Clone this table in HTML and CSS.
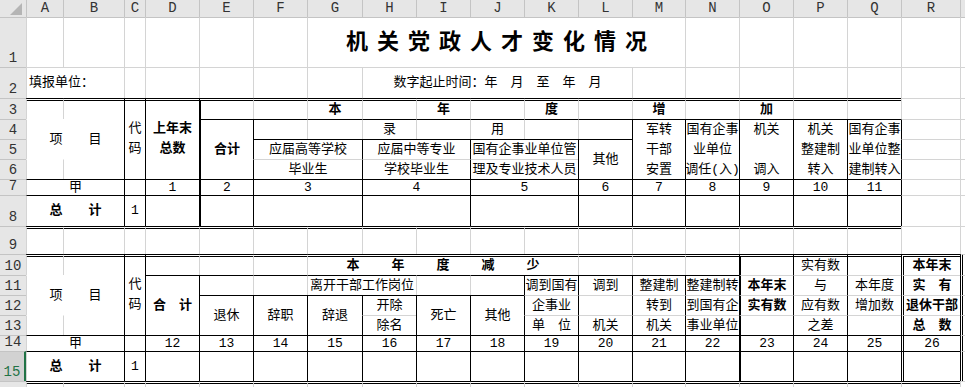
FILE: index.html
```html
<!DOCTYPE html>
<html lang="zh-CN">
<head>
<meta charset="utf-8">
<title>机关党政人才变化情况</title>
<link rel="stylesheet" href="styles.css">
</head>
<body>
<div class="sheet">
  <!-- column header -->
  <div class="corner"><svg width="26" height="17" viewBox="0 0 26 17"><polygon points="22,3 22,15 10,15" fill="#b5b5b5"/></svg></div>
  <div class="ch">A</div><div class="ch">B</div><div class="ch">C</div><div class="ch">D</div><div class="ch">E</div><div class="ch">F</div><div class="ch">G</div><div class="ch">H</div><div class="ch">I</div><div class="ch">J</div><div class="ch">K</div><div class="ch">L</div><div class="ch">M</div><div class="ch">N</div><div class="ch">O</div><div class="ch">P</div><div class="ch">Q</div><div class="ch">R</div><div class="ch"></div>

  <!-- row 1 -->
  <div class="rh r1h">1</div>
  <div class="c r1"></div><div class="c r1"></div><div class="c r1"></div><div class="c r1"></div><div class="c r1"></div><div class="c r1"></div>
  <div class="c r1 s7 title">机关党政人才变化情况</div>
  <div class="c r1"></div><div class="c r1"></div><div class="c r1"></div><div class="c r1"></div><div class="c r1"></div><div class="c r1"></div>

  <!-- row 2 -->
  <div class="rh">2</div>
  <div class="c s2 lft">填报单位：</div>
  <div class="c"></div><div class="c"></div><div class="c"></div><div class="c"></div><div class="c"></div>
  <div class="c s5">数字起止时间：年　月　至　年　月</div>
  <div class="c"></div><div class="c"></div><div class="c"></div><div class="c"></div><div class="c"></div><div class="c"></div><div class="c"></div>

  <!-- row 3 -->
  <div class="rh">3</div>
  <div class="c dt"></div><div class="c dt"></div>
  <div class="c dt kl v4 pt">代<br>码</div>
  <div class="c dt kl v4 pt b">上年末<br>总数</div>
  <div class="c dt tl"></div><div class="c dt"></div>
  <div class="c dt b">本</div><div class="c dt"></div>
  <div class="c dt b">年</div><div class="c dt"></div>
  <div class="c dt b">度</div><div class="c dt"></div>
  <div class="c dt b">增</div><div class="c dt"></div>
  <div class="c dt b">加</div><div class="c dt"></div><div class="c dt"></div>
  <div class="c"></div><div class="c"></div>

  <!-- row 4 -->
  <div class="rh">4</div>
  <div class="c s2 v2 nt">项　　目</div>
  <div class="c v3 tl kt b">合计</div>
  <div class="c kl kt"></div><div class="c kt"></div><div class="c kt">录</div><div class="c kt"></div><div class="c kt">用</div><div class="c kt"></div><div class="c kt"></div>
  <div class="c v3 kl kt">军转<br>干部<br>安置</div>
  <div class="c v3 kl kt">国有企事<br>业单位<br>调任(入)</div>
  <div class="c v3 kl kt">机关<br><br>调入</div>
  <div class="c v3 kl kt">机关<br>整建制<br>转入</div>
  <div class="c v3 kl kt">国有企事<br>业单位整<br>建制转入</div>
  <div class="c kl"></div><div class="c"></div>

  <!-- row 5 -->
  <div class="rh">5</div>
  <div class="c s2 kl kt">应届高等学校</div>
  <div class="c s2 kl kt">应届中等专业</div>
  <div class="c s2 kl kt">国有企事业单位管</div>
  <div class="c v2 kl kt">其他</div>
  <div class="c kl"></div><div class="c"></div>

  <!-- row 6 -->
  <div class="rh">6</div>
  <div class="c nt"></div><div class="c nt"></div>
  <div class="c s2 kl">毕业生</div>
  <div class="c s2 kl">学校毕业生</div>
  <div class="c s2 kl">理及专业技术人员</div>
  <div class="c kl"></div><div class="c"></div>

  <!-- row 7 -->
  <div class="rh">7</div>
  <div class="c s2 kt">甲</div>
  <div class="c kl kt"></div>
  <div class="c kl kt">1</div>
  <div class="c tl kt">2</div>
  <div class="c s2 kl kt">3</div>
  <div class="c s2 kl kt">4</div>
  <div class="c s2 kl kt">5</div>
  <div class="c kl kt">6</div>
  <div class="c kl kt">7</div>
  <div class="c kl kt">8</div>
  <div class="c kl kt">9</div>
  <div class="c kl kt">10</div>
  <div class="c kl kt">11</div>
  <div class="c kl"></div><div class="c"></div>

  <!-- row 8 -->
  <div class="rh">8</div>
  <div class="c s2 kt b">总　　计</div>
  <div class="c kl kt">1</div>
  <div class="c kl kt"></div>
  <div class="c tl kt"></div>
  <div class="c s2 kl kt"></div><div class="c s2 kl kt"></div><div class="c s2 kl kt"></div>
  <div class="c kl kt"></div><div class="c kl kt"></div><div class="c kl kt"></div><div class="c kl kt"></div><div class="c kl kt"></div><div class="c kl kt"></div>
  <div class="c kl"></div><div class="c"></div>

  <!-- row 9 -->
  <div class="rh">9</div>
  <div class="c dt"></div><div class="c dt"></div><div class="c dt"></div><div class="c dt"></div><div class="c dt"></div><div class="c dt"></div><div class="c dt"></div><div class="c dt"></div><div class="c dt"></div><div class="c dt"></div><div class="c dt"></div><div class="c dt"></div><div class="c dt"></div><div class="c dt"></div><div class="c dt"></div><div class="c dt"></div><div class="c dt"></div>
  <div class="c"></div><div class="c"></div>

  <!-- row 10 -->
  <div class="rh">10</div>
  <div class="c dt"></div><div class="c dt"></div>
  <div class="c dt kl v4 pt">代<br>码</div>
  <div class="c dt kl"></div><div class="c dt"></div><div class="c dt"></div>
  <div class="c dt s5 b wide">本年度减少</div>
  <div class="c dt"></div><div class="c dt"></div><div class="c dt"></div>
  <div class="c dt tl"></div>
  <div class="c dt kl">实有数</div>
  <div class="c dt kl"></div>
  <div class="c dt dl b">本年末</div>
  <div class="c dl"></div>

  <!-- row 11 -->
  <div class="rh">11</div>
  <div class="c s2 v2 nt">项　　目</div>
  <div class="c v3 kl kt b">合　计</div>
  <div class="c kl kt"></div><div class="c kt"></div>
  <div class="c s2 kt lft">离开干部工作岗位</div>
  <div class="c kt"></div><div class="c kt"></div>
  <div class="c kl kt">调到国有</div>
  <div class="c kl kt">调到</div>
  <div class="c kl kt">整建制</div>
  <div class="c kl kt">整建制转</div>
  <div class="c tl b">本年末</div>
  <div class="c kl">与</div>
  <div class="c kl">本年度</div>
  <div class="c dl b">实　有</div>
  <div class="c dl"></div>

  <!-- row 12 -->
  <div class="rh">12</div>
  <div class="c v2 kl kt">退休</div>
  <div class="c v2 kl kt">辞职</div>
  <div class="c v2 kl kt">辞退</div>
  <div class="c kl kt">开除</div>
  <div class="c v2 kl kt">死亡</div>
  <div class="c v2 kl kt">其他</div>
  <div class="c kl">企事业</div>
  <div class="c kl"></div>
  <div class="c kl">转到</div>
  <div class="c kl">到国有企</div>
  <div class="c tl b">实有数</div>
  <div class="c kl">应有数</div>
  <div class="c kl">增加数</div>
  <div class="c dl b">退休干部</div>
  <div class="c dl"></div>

  <!-- row 13 -->
  <div class="rh">13</div>
  <div class="c nt"></div><div class="c nt"></div>
  <div class="c kl">除名</div>
  <div class="c kl">单　位</div>
  <div class="c kl">机关</div>
  <div class="c kl">机关</div>
  <div class="c kl">事业单位</div>
  <div class="c tl"></div>
  <div class="c kl">之差</div>
  <div class="c kl"></div>
  <div class="c dl b">总　数</div>
  <div class="c dl"></div>

  <!-- row 14 -->
  <div class="rh">14</div>
  <div class="c s2 kt">甲</div>
  <div class="c kl kt"></div>
  <div class="c kl kt">12</div><div class="c kl kt">13</div><div class="c kl kt">14</div><div class="c kl kt">15</div><div class="c kl kt">16</div><div class="c kl kt">17</div><div class="c kl kt">18</div><div class="c kl kt">19</div><div class="c kl kt">20</div><div class="c kl kt">21</div><div class="c kl kt">22</div>
  <div class="c tl kt">23</div>
  <div class="c kl kt">24</div>
  <div class="c kl kt">25</div>
  <div class="c dl kt">26</div>
  <div class="c dl"></div>

  <!-- row 15 -->
  <div class="rh sel">15</div>
  <div class="c s2 kt b">总　　计</div>
  <div class="c kl kt">1</div>
  <div class="c kl kt"></div><div class="c kl kt"></div><div class="c kl kt"></div><div class="c kl kt"></div><div class="c kl kt"></div><div class="c kl kt"></div><div class="c kl kt"></div><div class="c kl kt"></div><div class="c kl kt"></div><div class="c kl kt"></div><div class="c kl kt"></div>
  <div class="c tl kt"></div>
  <div class="c kl kt"></div>
  <div class="c kl kt"></div>
  <div class="c dl kt"></div>
  <div class="c dl"></div>

  <!-- row 16 -->
  <div class="rh"></div>
  <div class="c dt"></div><div class="c dt"></div><div class="c dt"></div><div class="c dt"></div><div class="c dt"></div><div class="c dt"></div><div class="c dt"></div><div class="c dt"></div><div class="c dt"></div><div class="c dt"></div><div class="c dt"></div><div class="c dt"></div><div class="c dt"></div><div class="c dt"></div><div class="c dt"></div><div class="c dt"></div><div class="c dt"></div><div class="c dt"></div>
  <div class="c"></div>
</div>
</body>
</html>
```

FILE: styles.css
```css
* { box-sizing: border-box; margin: 0; padding: 0; }
html, body { background: #fff; overflow: hidden; }
body { width: 965px; height: 387px; }

.sheet {
  display: grid;
  width: 1000px;
  grid-template-columns: 26px 37px 61px 21px 54px 54px 54px 55px 54px 54px 54px 54px 54px 53px 54px 54px 54px 54px 59px 40px;
  grid-template-rows: 17px 50px 31px 21px 20px 20px 20px 16px 31px 28px 21px 20px 20px 20px 16px 30px 6px;
  font-family: "Liberation Mono", "Noto Sans CJK SC", monospace;
  font-size: 13px;
  line-height: 20px;
  color: #000;
}

/* headers */
.corner { background: #e6e6e6; }
.corner svg { display: block; }
.ch {
  background: #e6e6e6;
  border-left: 1px solid #c4c4c4;
  display: flex; align-items: center; justify-content: center;
  font-size: 14px; line-height: 17px; color: #333;
}
.rh {
  background: #e6e6e6;
  border-top: 1px solid #c4c4c4;
  display: flex; align-items: flex-end; justify-content: center;
  font-size: 14px; line-height: 16px; color: #333;
  padding-bottom: 1px;
}
.rh.sel {
  background: #d2d2d2;
  color: #217346;
  border-right: 2px solid #217346;
}

/* cells */
.c {
  border-left: 1px solid #d4d4d4;
  border-top: 1px solid #d4d4d4;
  display: flex; flex-direction: column; align-items: center; justify-content: center;
  text-align: center;
  white-space: nowrap;
  min-width: 0;
}
.r1 { border-top-color: #c4c4c4; }
.kl { border-left-color: #000; }
.kt { border-top-color: #000; }
.tl { border-left: 2px solid #000; }
.dl { border-left: 3px double #000; }
.dt { border-top: 3px double #000; }
.nt { border-top-color: transparent; }

.s2 { grid-column: span 2; }
.s5 { grid-column: span 5; }
.s7 { grid-column: span 7; }
.v2 { grid-row: span 2; }
.v3 { grid-row: span 3; }
.v4 { grid-row: span 4; }

.b { font-weight: 700; }
.pt { justify-content: flex-start; padding-top: 18px; }
.lft { align-items: flex-start; padding-left: 2px; }

.title {
  font-size: 22px;
  font-weight: 700;
  letter-spacing: 9px;
  padding-left: 9px;
  padding-top: 2px;
  line-height: 28px;
}
.wide {
  letter-spacing: 32px;
  padding-left: 32px;
}
```
